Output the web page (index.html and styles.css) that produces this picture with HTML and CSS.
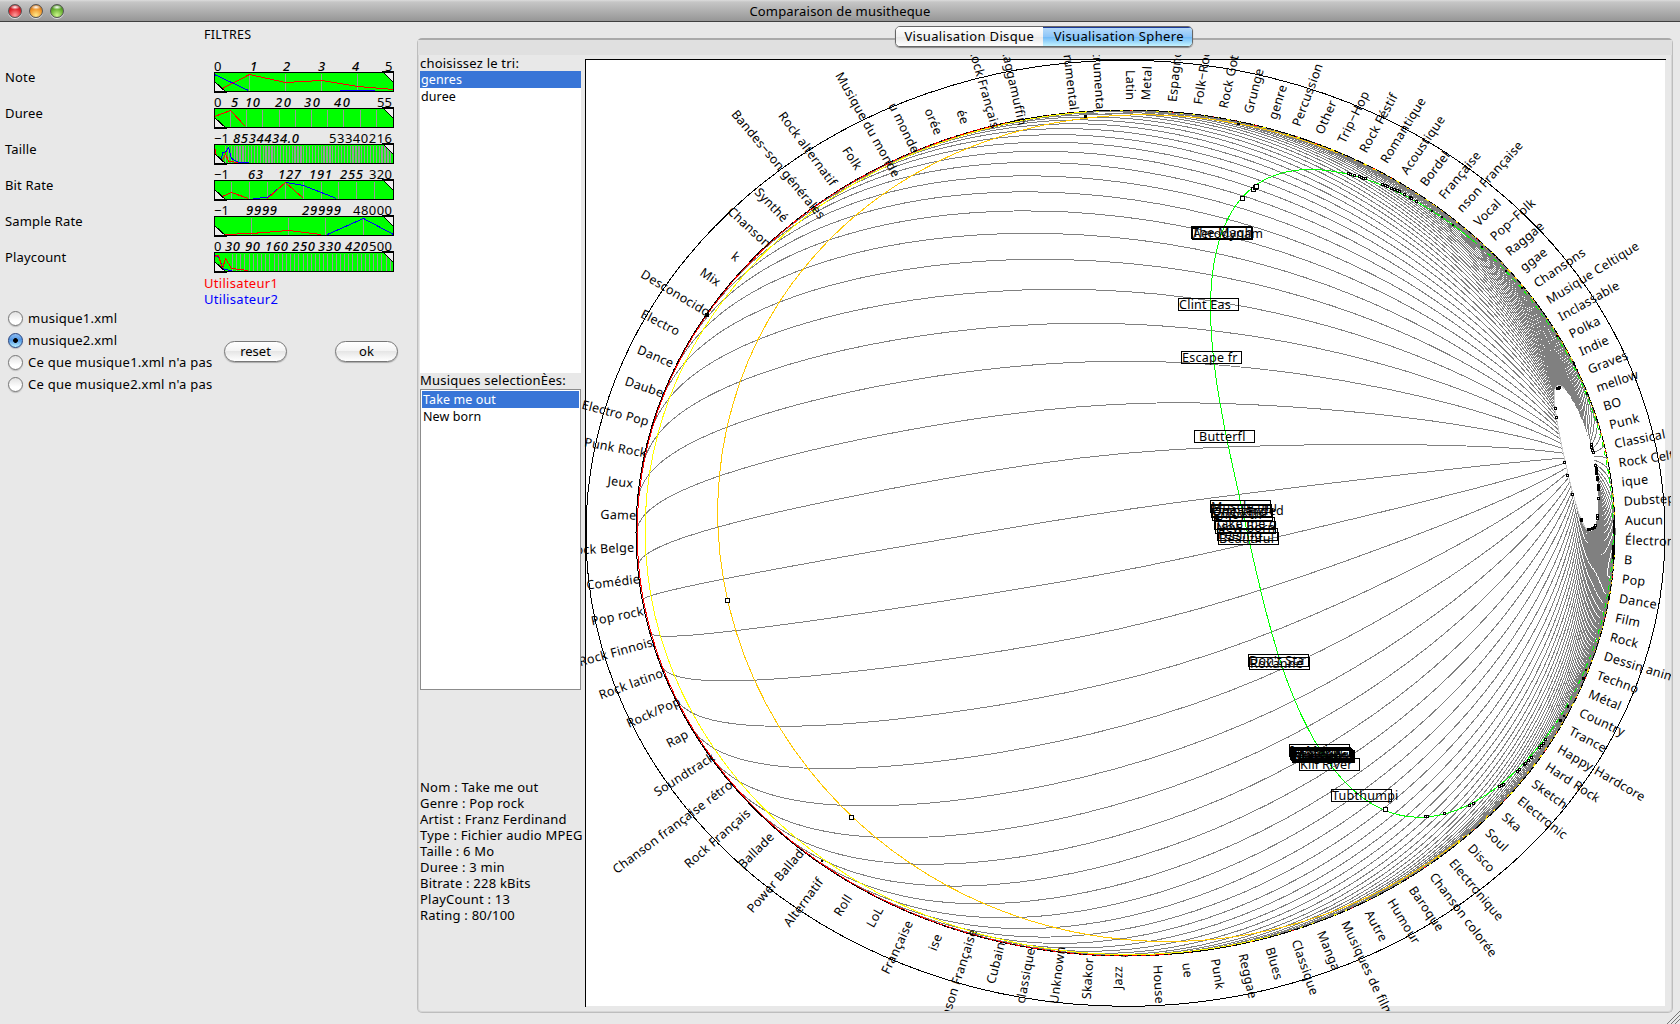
FILE: index.html
```html
<!DOCTYPE html>
<html lang="fr">
<head>
<meta charset="utf-8">
<title>Comparaison de musitheque</title>
<link rel="stylesheet" href="styles.css">
</head>
<body>
<header class="titlebar">
  <div class="lights"><i class="light red"></i><i class="light amber"></i><i class="light green"></i></div>
  <h1>Comparaison de musitheque</h1>
</header>
<main class="window">
  <section class="filters">
    <h2>FILTRES</h2>
    <div class="filter-rows" id="filters"></div>
    <div class="users"><p class="user1">Utilisateur1</p><p class="user2">Utilisateur2</p></div>
    <div class="choices">
      <div class="radios">
        <label><i class="radio"></i>musique1.xml</label>
        <label><i class="radio on"></i>musique2.xml</label>
        <label><i class="radio"></i>Ce que musique1.xml n'a pas</label>
        <label><i class="radio"></i>Ce que musique2.xml n'a pas</label>
      </div>
      <button class="btn">reset</button>
      <button class="btn">ok</button>
    </div>
  </section>
  <section class="pane">
    <nav class="tabs"><span class="tab">Visualisation Disque</span><span class="tab active">Visualisation Sphere</span></nav>
    <div class="band"></div>
    <div class="content">
      <aside class="side">
        <p class="caption">choisissez le tri:</p>
        <ul class="list sort"><li class="sel">genres</li><li>duree</li></ul>
        <p class="caption">Musiques selectionÈes:</p>
        <ul class="list songs"><li class="sel">Take me out</li><li>New born</li></ul>
        <div class="info">
          <p>Nom : Take me out</p><p>Genre : Pop rock</p><p>Artist : Franz Ferdinand</p><p>Type : Fichier audio MPEG</p><p>Taille : 6 Mo</p><p>Duree : 3 min</p><p>Bitrate : 228 kBits</p><p>PlayCount : 13</p><p>Rating : 80/100</p>
        </div>
      </aside>
      <svg class="sphere" id="sphere" viewBox="581 55 1090 956" width="1090" height="956"></svg>
    </div>
  </section>
</main>
<svg class="grip" width="14" height="14" viewBox="0 0 14 14"><path d="M1 14L14 1M5 14L14 5M9 14L14 9" stroke="#777" fill="none"/></svg>
<script src="app.js"></script>
</body>
</html>
```
FILE: styles.css
```css
* { box-sizing: border-box; margin: 0; padding: 0; }
body {
  width: 1680px; height: 1024px; overflow: hidden; position: relative;
  display: flex; flex-direction: column;
  background: #e8e8e8; color: #000;
  font: 12.5px/16px "Noto Sans", "Open Sans", sans-serif;
}
.titlebar {
  height: 22px; flex: none; display: grid; grid-template-columns: 80px 1fr 80px; align-items: center;
  background: linear-gradient(#dcdcdc 0, #c6c6c6 2px, #969696 100%);
  border-bottom: 1px solid #404040;
}
.titlebar h1 { font-size: 13px; font-weight: 400; text-align: center; line-height: 21px; letter-spacing: .18px; padding-top: 1px; }
.lights { display: flex; gap: 7px; padding-left: 8px; }
.light { width: 14px; height: 14px; border-radius: 50%; border: 1px solid #555; box-shadow: 0 1px 0 #ddd; }
.light.red { background: radial-gradient(ellipse 5px 2.5px at 50% 18%, #fff, transparent), radial-gradient(circle at 50% 85%, #ff9d9d, #e0252c 55%, #8d0d14); }
.light.amber { background: radial-gradient(ellipse 5px 2.5px at 50% 18%, #fff, transparent), radial-gradient(circle at 50% 85%, #ffe98a, #f0962b 55%, #a3520c); }
.light.green { background: radial-gradient(ellipse 5px 2.5px at 50% 18%, #fff, transparent), radial-gradient(circle at 50% 85%, #cdf78c, #67b031 55%, #2e6b12); }
.window { flex: 1; display: flex; min-height: 0; }
.filters { width: 417px; flex: none; padding-top: 5px; }
.filters h2 { font-size: 12.5px; font-weight: 400; line-height: 16px; padding-left: 204px; letter-spacing: .25px; }
.filter-rows { padding-top: 16px; }
.filter { display: flex; height: 36px; }
.filter-name { width: 214px; flex: none; padding: 10px 0 0 5px; font-size: 13px; line-height: 16px; letter-spacing: .15px; }
.filter svg { overflow: visible; }
.users { padding-left: 204px; font-size: 13px; line-height: 16px; letter-spacing: .3px; }
.user1 { color: #f00; }
.user2 { color: #00f; }
.choices { display: flex; padding-left: 8px; align-items: center; height: 88px; }
.radios { width: 216px; flex: none; }
.radios label { display: flex; align-items: center; gap: 5px; height: 22px; font-size: 13px; white-space: nowrap; letter-spacing: .24px; }
.radio { flex: none; width: 15px; height: 15px; border-radius: 50%; border: 1px solid #777; background: linear-gradient(#e2e2e2, #fff 70%); box-shadow: 0 1px 1px #bbb; }
.radio.on { border-color: #24417e; background: radial-gradient(circle, #000 0 2px, transparent 2.8px), linear-gradient(#8fbdf0, #4e94e3 45%, #b8f0ff); }
.btn { width: 63px; height: 21px; border: 1px solid #777; border-radius: 11px; background: linear-gradient(#fff, #f4f4f4 45%, #e6e6e6 50%, #fff); box-shadow: 0 1px 1px #aaa; font: 13px/17px "Noto Sans", sans-serif; text-align: center; }
.btn + .btn { margin-left: 48px; }
.pane { width: 1256px; height: 975px; margin-top: 16px; position: relative; border: 1px solid #bdbdbd; border-top: 2px solid #aaa; border-radius: 5px; background: #e8e8e8; box-shadow: inset 0 0 0 1px #d6d6d6; }
.band { height: 15px; background: #e0e0e0; }
.tabs { position: absolute; left: 477px; top: -14px; width: 298px; height: 21px; display: flex; border: 1px solid #666; border-radius: 5px; overflow: hidden; box-shadow: 0 1px 1px #888; }
.tab { flex: 1; text-align: center; font-size: 13px; line-height: 18px; letter-spacing: .35px; background: linear-gradient(#fff, #f2f2f2 50%, #e6e6e6 50%, #fff); white-space: nowrap; }
.tab.active { background: linear-gradient(#b9dcfa, #8ec6f8 50%, #6cb6f6 51%, #c3f3ff); box-shadow: inset 0 1px 0 #1b3a9a; padding-left: 3px; }
.content { display: grid; grid-template-columns: 161px 1090px; padding-left: 2px; height: 956px; }
.side { display: flex; flex-direction: column; padding-top: 1px; }
.caption { height: 15px; line-height: 15px; font-size: 13px; letter-spacing: .22px; white-space: nowrap; }
.list { list-style: none; background: #fff; }
.list li { height: 17px; line-height: 17px; padding-left: 1px; letter-spacing: .1px; }
.list .sel { background: #3875d7; color: #fff; }
.sort { height: 302px; }
.songs { margin-top: 1px; height: 301px; padding: 1px; border: 1px solid #8c8c8c; }
.songs li { padding-left: 1px; }
.info { padding-top: 89px; white-space: nowrap; font-size: 13px; letter-spacing: .22px; }
.info p { height: 16px; }
.sphere { display: block; }
.sphere text { font: 12.5px "Noto Sans", "Open Sans", sans-serif; letter-spacing: .25px; }
.grip { position: absolute; right: 0; bottom: 0; }
```
FILE: app.js
```js
const NS = 'http://www.w3.org/2000/svg';
function add(parent, tag, attrs, text) {
  const e = document.createElementNS(NS, tag);
  for (const k in attrs) e.setAttribute(k, attrs[k]);
  if (text !== undefined) e.textContent = text;
  parent.appendChild(e);
  return e;
}

/* ---- filter sliders: [text, x, width, italic], separators, histograms ---- */
const range = (a, b, s) => { const r = []; for (let x = a; x < b; x += s) r.push(x); return r; };
const filters = [
  { name: 'Note', labels: [['0', 0, 7], ['1', 36, 6, 1], ['2', 69, 7, 1], ['3', 104, 7, 1], ['4', 138, 7, 1], ['5', 171, 7]],
    ticks: [35, 71, 107, 143], red: '8,16 35,2 71,10 107,8 143,14 179,17', blue: ['0,2 34,18', '125,18 160,18'] },
  { name: 'Duree', labels: [['0', 0, 7], ['5', 17, 7, 1], ['10', 31, 15, 1], ['20', 61, 16, 1], ['30', 90, 16, 1], ['40', 120, 16, 1], ['55', 163, 15]],
    ticks: [16, 32, 48, 65, 81, 97, 113, 129, 146, 162], red: '0,8 16,2 31,18', blue: [] },
  { name: 'Taille', labels: [['−1', 0, 15], ['8534434.0', 19, 66, 1], ['53340216', 115, 63]],
    ticks: range(11, 177, 2.9), dense: 1, red: '0,2 2,12 8,16 11,9 14,17 24,18', blue: ['7,16 8,8 11,8 14,3 17,14 24,18 34,18'] },
  { name: 'Bit Rate', labels: [['−1', 0, 15], ['63', 34, 15, 1], ['127', 64, 23, 1], ['191', 95, 23, 1], ['255', 126, 23, 1], ['320', 155, 23]],
    ticks: [17, 35, 53, 71, 89, 107, 124, 142, 160], red: '8,16 17,12 34,18 M53,18 71,2 89,18', blue: ['39,18 53,17 71,2 89,5 122,18'] },
  { name: 'Sample Rate', labels: [['−1', 0, 15], ['9999', 32, 31, 1], ['29999', 88, 39, 1], ['48000', 139, 39]],
    ticks: [37, 74, 111, 149], red: '8,18 37,17 74,14 107,18', blue: ['113,18 149,2 179,18'] },
  { name: 'Playcount', labels: [['0', 0, 7], ['30', 11, 15, 1], ['90', 31, 15, 1], ['160', 51, 23, 1], ['250', 78, 23, 1], ['330', 104, 23, 1], ['420', 131, 23, 1], ['500', 155, 23]],
    ticks: range(18, 177, 4.15), red: '0,4 4,3 8,16 11,6 17,16 34,18', blue: ['0,3 4,4 9,17 18,18'] }
];
const host = document.getElementById('filters');
filters.forEach(f => {
  const row = document.createElement('div');
  row.className = 'filter';
  const name = document.createElement('span');
  name.className = 'filter-name';
  name.textContent = f.name;
  row.appendChild(name);
  const s = add(row, 'svg', { width: 180, height: 36 });
  const g = add(s, 'g', { transform: 'translate(.5,13.5)', 'shape-rendering': 'crispEdges' });
  add(g, 'rect', { x: 0, y: 0, width: 179, height: 19, fill: '#0f0' });
  f.ticks.forEach(x => add(g, 'path', { d: `M${x},1V18`, stroke: '#999', 'stroke-width': f.dense ? 1.3 : 1 }));
  f.blue.forEach(p => add(g, 'path', { d: 'M' + p, stroke: '#00f', fill: 'none' }));
  add(g, 'path', { d: 'M' + f.red, stroke: '#f00', fill: 'none' });
  add(g, 'path', { d: 'M0,9L12,20H0Z', fill: '#eee', stroke: '#000' });
  add(g, 'path', { d: 'M168,-1H179V10Z', fill: '#eee', stroke: '#000' });
  add(g, 'rect', { x: 0, y: 0, width: 179, height: 19, fill: 'none', stroke: '#000' });
  f.labels.forEach(([t, x, w, it]) => add(s, 'text', { x, y: 12, textLength: w, 'font-size': 13, 'font-family': 'Noto Sans', 'font-weight': it ? 500 : 400, 'font-style': it ? 'italic' : 'normal' }, t));
  host.appendChild(row);
});

/* ---- sphere ---- */
const svg = document.getElementById('sphere');
const CX = 1125.5, CY = 533, RX = 489.5, RY = 423;
const fx = 0.982, fy = -0.189, RAD = Math.PI / 180, STEP = 360 / 112 * RAD, B = 3.7;
const ringR = [0.185, 0.896, 1.596, 2.296, 2.996];
// radial compression of the flat disc onto the ball
function project(psi, rho) {
  const x = fx + rho * Math.cos(psi), y = fy + rho * Math.sin(psi), r = Math.hypot(x, y) + 1e-6;
  const g = Math.tanh(1.853 * r * Math.pow(r * r + 0.012, -0.0685)) / r;
  return [CX + RX * x * g, CY + RY * y * g];
}
const psiOf = i => 1.6 * RAD + STEP * (i - 34);
const toPath = pts => 'M' + pts.map(p => p[0].toFixed(1) + ',' + p[1].toFixed(1)).join('L');
function arc(rho, a, b) {
  const pts = [];
  for (let i = a; i <= b; i += 0.5) pts.push(project(psiOf(i), rho));
  return toPath(pts);
}
add(svg, 'rect', { x: 585, y: 59, width: 1080, height: 947, fill: '#fff' });
const net = add(svg, 'g', { fill: 'none', 'shape-rendering': 'crispEdges' });
for (let i = 1; i <= 112; i++) {
  const pts = [];
  for (let k = 0; k <= 90; k++) pts.push(project(psiOf(i + 0.5), ringR[0] + (B - ringR[0]) * Math.pow(k / 90, 1.3)));
  add(net, 'path', { d: toPath(pts), stroke: '#808080' });
}
add(net, 'path', { d: arc(ringR[0], 62, 118), stroke: '#ccc' });
add(net, 'ellipse', { cx: CX, cy: CY, rx: RX, ry: RY, stroke: '#000' });
add(net, 'path', { d: arc(ringR[4], 66, 107), stroke: '#f00' });
add(net, 'path', { d: arc(ringR[4], -5, 66), stroke: '#f00', 'stroke-dasharray': '2 19' });
add(net, 'path', { d: arc(ringR[3], 64, 108), stroke: '#ff0' });
add(net, 'path', { d: arc(ringR[3], -4, 64), stroke: '#ff0', 'stroke-dasharray': '3 9' });
add(net, 'path', { d: arc(ringR[2], 58, 116), stroke: '#ffc800' });
add(net, 'path', { d: arc(ringR[2], 4, 58), stroke: '#ffc800', 'stroke-dasharray': '3 7' });
add(net, 'path', { d: arc(ringR[1], 56, 120), stroke: '#0f0' });
add(net, 'path', { d: arc(ringR[1], 8, 56), stroke: '#0f0', 'stroke-dasharray': '5 4' });
add(net, 'ellipse', { cx: CX, cy: CY, rx: RX, ry: RY, stroke: '#000', 'stroke-dasharray': '4 5' });
add(net, 'ellipse', { cx: 1125.5, cy: 533.3, rx: 539.5, ry: 473, stroke: '#000' });
add(net, 'path', { d: 'M585.5,1007V59.5H1666', stroke: '#000' });

// right-hand genres start just outside the ball
const right = ['', 'Metal', 'Espagnol', 'Folk−Rock', 'Rock Gothique', 'Grunge', 'genre', 'Percussion', 'Other', 'Trip−Hop', 'Rock Féstif', 'Romantique', 'Acoustique', 'Bordel', 'Française', 'nson Française', 'Vocal', 'Pop−Folk', 'Raggae', 'ggae', 'Chansons', 'Musique Celtique', 'Inclassable', 'Polka', 'Indie', 'Graves', 'mellow', 'BO', 'Punk', 'Classical', 'Rock Celtique', 'ique', 'Dubstep', 'Aucun', 'Électronique', 'B', 'Pop', 'Dance', 'Film', 'Rock', 'Dessin animé', 'Techno', 'Métal', 'Country', 'Trance', 'Happy Hardcore', 'Hard Rock', 'Sketch', 'Electronic', 'Ska', 'Soul', 'Disco', 'Electronique', 'Chanson colorée', 'Baroque', 'Humour', 'Autre', 'Musiques de film', 'Manga', 'Classique', 'Blues', 'Reggae', 'Punk', 'ue', 'House'];
// left-hand genres end near the ball: [name, overlap in px]
const left = [['Jazz', -10], ['Skakor', -3], ['Unknown', 6], ['classique', 0], ['Cubain', 0], ['nson Française', 5], ['ise', -10], ['Française', -8], ['LoL', -8], ['Roll', -12], ['Alternatif', -13], ['Power Ballad', -1], ['Ballade', -7], ['Rock Français', -6], ['Chanson française rétro', 0], ['Soundtrack', 3], ['Rap', -6], ['Rock/Pop', 3], ['Rock latino', -1], ['Rock Finnois', 0], ['Pop rock', -1], ['Comédie', 1], ['Rock Belge', -2], ['Game', 0], ['Jeux', -6], ['Punk Rock', 2], ['Electro Pop', -4], ['Daube', 0], ['Dance', -3], ['Electro', -13], ['Desconocido', 2], ['Mix', -8], ['k', -10], ['Chanson', 2], ['Synthé', -6], ['Bandes−son générales', 14], ['Rock alternatif', -7], ['Folk', -8], ['Musique du monde', 16], ['u monde', 2], ['orée', -7], ['ée', -9], ['Rock Français', 3], ['Raggamuffin', 6], ['', 0], ['Instrumental', -2], ['Instrumenta', -1]];
function label(psi, text, out, onLeft) {
  const a = Math.atan2(fy + B * Math.sin(psi), fx + B * Math.cos(psi));
  const x = CX + (RX + out) * Math.cos(a), y = CY + (RY + out) * Math.sin(a);
  const deg = a * 180 / Math.PI + (onLeft ? 180 : 0);
  add(svg, 'text', { transform: `translate(${x.toFixed(1)},${y.toFixed(1)}) rotate(${deg.toFixed(2)})`, 'text-anchor': onLeft ? 'end' : 'start' }, text);
}
right.forEach((t, k) => t && label((1.6 + 3.25 * (k - 33)) * RAD, t, 10, false));
left.forEach(([t, o], k) => t && label(psiOf(k + 66.4 - 0.8 * k / 46), t, -o, true));
add(svg, 'text', { transform: 'translate(1126,70) rotate(90)' }, 'Latin');

// tracks
const marks = add(svg, 'g', { 'shape-rendering': 'crispEdges', fill: 'none', stroke: '#000' });
const tracks = [['The Magh', 1191, 226], ['Aerodynam', 1192, 227], ['Clint Eas', 1178, 298], ['Escape fr', 1181, 351], ['Butterfl', 1194, 430, 4],
  ['Muscle mu', 1210, 500], ['Unintended', 1211, 504], ['One kind', 1211, 505], ['Enjoy th', 1212, 508], ['Take me o', 1214, 517], ['New born', 1215, 521], ['Feeling', 1217, 528], ['Beautiful', 1218, 532],
  ["Don't Sta", 1248, 654], ['Roxanne', 1249, 657],
  ['In Mainz', 1289, 744], ['Hysteria', 1290, 747], ['The Wings', 1291, 748], ['Madness', 1292, 749], ['Bonnes', 1292, 750], ['Plug in b', 1293, 750], ['Starlights', 1294, 750], ['Kill River', 1299, 758], ['Tubthumpi', 1331, 789]];
tracks.forEach(([t, x, y, dx]) => {
  add(marks, 'rect', { x: x + .5, y: y + .5, width: 60, height: 12 });
  add(svg, 'text', { x: x + 1 + (dx || 0), y: y + 11 }, t);
});
const sq = (s, list) => list.forEach(([x, y]) => add(marks, 'rect', { x: Math.round(x - s / 2) + .5, y: Math.round(y - s / 2) + .5, width: s, height: s, fill: '#fff' }));
sq(4, [[727, 600], [851, 817], [1242, 198], [1253, 189], [1255, 187], [1256, 186], [1385, 809]]);
sq(2, [[1348, 173], [1350, 174], [1354, 175], [1359, 176], [1361, 177], [1363, 178], [1365, 178], [1382, 184], [1385, 185], [1387, 186], [1391, 188], [1394, 189], [1397, 190], [1399, 191], [1404, 194], [1410, 197], [1411, 198], [1416, 201],
  [1425, 816], [1427, 816], [1444, 813], [1469, 805], [1473, 803], [1499, 786], [1501, 785], [1503, 784], [1517, 771], [1519, 769], [1524, 764], [1525, 763], [1528, 760], [1531, 757], [1539, 747], [1541, 745], [1543, 743], [1545, 739],
  [1555, 408], [1556, 417], [1564, 462], [1567, 475], [1572, 494], [1591, 444], [1591, 447], [1592, 450], [1593, 452], [1595, 465], [1598, 498], [1597, 515], [1597, 518], [1595, 525]]);
const dot = (x, y, w, h) => add(svg, 'rect', { x, y, width: w, height: h, fill: '#000' });
[[1556, 387, 4, 3], [1558, 386, 3, 3], [1595, 467, 3, 8], [1596, 476, 3, 5], [1597, 484, 3, 7], [1580, 518, 3, 4], [1587, 528, 4, 3], [1591, 527, 3, 3], [1593, 526, 3, 3],
 [1431, 210, 2, 2], [1441, 216, 2, 2], [1452, 224, 2, 2], [1481, 246, 2, 2], [1505, 270, 2, 2], [1521, 287, 2, 2], [1556, 335, 2, 2], [1573, 362, 2, 3], [1586, 392, 2, 3],
 [1613, 520, 2, 14], [1612, 545, 2, 14], [1608, 596, 2, 4], [1585, 669, 2, 2], [1582, 677, 3, 3], [1567, 705, 2, 3], [1563, 715, 2, 2], [1559, 719, 3, 3],
 [1084, 115, 3, 3], [1237, 123, 3, 2], [705, 313, 4, 4], [821, 860, 2, 2]].forEach(d => dot(...d));
```
